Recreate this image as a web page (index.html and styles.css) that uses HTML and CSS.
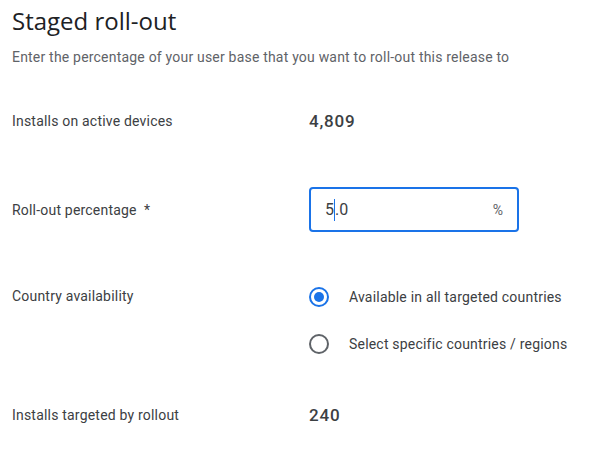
FILE: index.html
```html
<!DOCTYPE html>
<html>
<head>
<meta charset="utf-8">
<link rel="stylesheet" href="styles.css">
</head>
<body>
<div class="page">
  <h1 class="title">Staged roll-out</h1>
  <p class="sub">Enter the percentage of your user base that you want to roll-out this release to</p>

  <div class="row row-installs">
    <div class="label">Installs on active devices</div>
    <div class="value">4,809</div>
  </div>

  <div class="row row-pct">
    <div class="label">Roll-out percentage&nbsp; *</div>
    <div class="field">
      <span class="field-text">5<span class="caret"></span>.0</span>
      <span class="suffix">%</span>
    </div>
  </div>

  <div class="row row-country">
    <div class="label label-top">Country availability</div>
    <div class="radios">
      <div class="radio-item">
        <span class="radio checked"><span class="dot"></span></span>
        <span class="radio-label">Available in all targeted countries</span>
      </div>
      <div class="radio-item">
        <span class="radio"></span>
        <span class="radio-label">Select specific countries / regions</span>
      </div>
    </div>
  </div>

  <div class="row row-targeted">
    <div class="label">Installs targeted by rollout</div>
    <div class="value">240</div>
  </div>
</div>
</body>
</html>
```

FILE: styles.css
```css
html, body {
  margin: 0;
  padding: 0;
  background: #ffffff;
}
body {
  font-family: Roboto, "Liberation Sans", sans-serif;
  color: #3c4043;
}
.page {
  padding: 5px 12px 0 12px;
  display: flex;
  flex-direction: column;
}
.title {
  margin: 0;
  font-family: "Open Sans", Roboto, sans-serif;
  font-weight: 400;
  font-size: 24px;
  line-height: 32px;
  color: #202124;
}
.sub {
  margin: 10px 0 0 0;
  font-size: 14px;
  line-height: 20px;
  color: #5f6368;
  letter-spacing: 0.2px;
}
.row {
  display: grid;
  grid-template-columns: 297px 1fr;
  align-items: center;
}
.label {
  font-size: 14px;
  line-height: 20px;
  color: #3c4043;
  letter-spacing: 0.2px;
}
.value {
  font-size: 17px;
  font-weight: 500;
  color: #3c4043;
  letter-spacing: 0.8px;
}
.row-installs {
  margin-top: 32px;
  height: 44px;
}
.row-pct {
  margin-top: 44px;
  height: 44px;
}
.field {
  box-sizing: border-box;
  width: 210px;
  height: 45px;
  border: 2px solid #1a73e8;
  border-radius: 4px;
  display: flex;
  align-items: center;
  justify-content: space-between;
  padding: 0 14px 0 14px;
}
.field-text {
  font-size: 16px;
  color: #3c4043;
  display: inline-flex;
  align-items: center;
}
.caret {
  display: inline-block;
  width: 1px;
  height: 22px;
  background: #1a73e8;
}
.suffix {
  font-size: 14px;
  color: #5f6368;
}
.row-country {
  margin-top: 42px;
  align-items: start;
}
.label-top {
  line-height: 47px;
}
.radios {
  display: flex;
  flex-direction: column;
}
.radio-item {
  height: 47px;
  display: flex;
  align-items: center;
}
.radio {
  box-sizing: border-box;
  width: 20px;
  height: 20px;
  border: 2px solid #5f6368;
  border-radius: 50%;
  display: inline-flex;
  align-items: center;
  justify-content: center;
  margin-right: 20px;
}
.radio.checked {
  border-color: #1a73e8;
}
.dot {
  width: 10px;
  height: 10px;
  border-radius: 50%;
  background: #1a73e8;
}
.radio-label {
  font-size: 14px;
  color: #3c4043;
  letter-spacing: 0.2px;
}
.row-targeted {
  margin-top: 26px;
  height: 44px;
}
```
